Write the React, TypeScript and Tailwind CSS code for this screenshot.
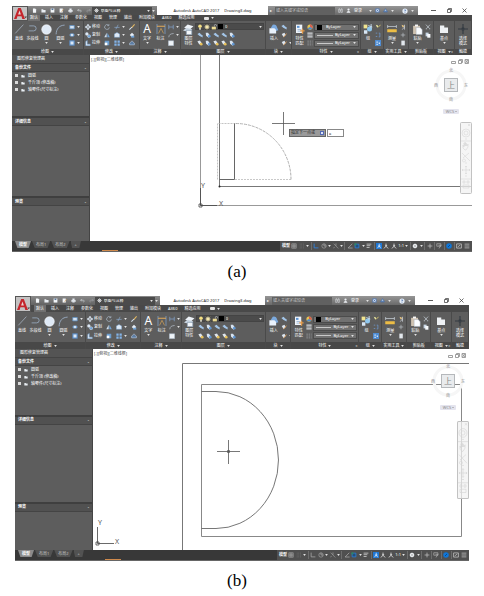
import React from "react";

type Shape = "door" | "arc";

const ICONS: Record<string, React.ReactNode> = {
  line: <path d="M1 7.5L7.5.5" stroke="#aab6c4" strokeWidth=".6" />,
  polyline: <path d="M1 1.5h3.5a2 2 0 0 1 0 4H.5" stroke="#9fb4cc" strokeWidth=".6" fill="none" />,
  circle: <circle cx="4" cy="4" r="3.5" fill="#dfe9f5" stroke="#fff" strokeWidth=".4" />,
  arc: <path d="M.8 7.5C1 3.5 3 1 7 .8" stroke="#9fb4cc" strokeWidth=".6" fill="none" />,
  rect: <path d="M1 2h6v4.5H1z" fill="#d5e3f2" stroke="#5e90c4" />,
  ellipse: <><ellipse cx="4" cy="4" rx="3.4" ry="2.2" fill="#7ba6d4" /><circle cx="4" cy="4" r="1.2" fill="#fff" /></>,
  hatch: <><path d="M.5.5h7v7h-7z" fill="#5d92cf" /><path d="M2 2h4v4H2z" fill="#dce8f5" /></>,
  move: <path d="M4 0v8M0 4h8M4 .5L2.8 2h2.4zM4 7.5L2.8 6h2.4zM.5 4L2 2.8v2.4zM7.5 4L6 2.8v2.4z" stroke="#d9e4f0" strokeWidth=".9" fill="#d9e4f0" />,
  copy: <><circle cx="2.5" cy="2.5" r="2.2" fill="#dce8f5" /><circle cx="5.5" cy="5.6" r="2.1" fill="#6fa3d8" stroke="#fff" strokeWidth=".5" /></>,
  stretch: <path d="M1 7.5V2l2-1.5v5h4v2z" fill="#e9f1fa" stroke="#6c9dcf" strokeWidth=".7" />,
  rotate: <path d="M6 1.5A3.2 3.2 0 1 0 7.2 4.5M6.5.2v2H4.4" stroke="#b8c8da" strokeWidth=".8" fill="none" />,
  mirror: <><path d="M3.6 1v6H.4z" fill="#cfdeee" /><path d="M4.5 1v6h3.2z" fill="#6fa3d8" /></>,
  scale: <><path d="M1 1h6v6H1z" fill="#6b9dcf" /><path d="M1 3.5h3.5V7H1z" fill="#fff" /></>,
  trim: <path d="M.5 4.5h7M5.5 1L2.5 7" stroke="#8eb2da" strokeWidth=".8" />,
  fillet: <path d="M.5 7V2.5L4 .8l3.5 2V7z" fill="#dfeaf6" stroke="#74a3d4" strokeWidth=".6" />,
  array: <path d="M.5.5h3v3h-3zM4.7.5h3v3h-3zM.5 4.7h3v3h-3zM4.7 4.7h3v3h-3z" fill="#83b4e8" />,
  erase: <><path d="M7.5.5L3.5 5" stroke="#e8bc62" strokeWidth="1.5" /><path d="M.5 7.5L4 4" stroke="#d9e4f0" strokeWidth="1.4" /></>,
  explode: <><path d="M1 4l3-3 3 3-3 3z" fill="#e6eef7" /><path d="M3 5h4v2.5H3z" fill="#6fa3d8" /></>,
  offset: <path d="M.8 6.5h6.4a3.2 3.2 0 0 0-2-4L4 1 2.8 2.5a3.2 3.2 0 0 0-2 4z" fill="#5d7ea5" stroke="#d4e0ee" strokeWidth=".6" />,
  dim: <><path d="M.8 0v8M7.2 0v8" stroke="#89b0e2" strokeWidth=".5" /><path d="M.8 1.8h6.4" stroke="#e2ab5a" strokeWidth=".8" /><path d="M2 7.5l2-4 2 4" stroke="#e2ab5a" strokeWidth=".5" fill="none" /></>,
  linear: <path d="M1 1v6M7 1v6M1 4h6" stroke="#89b0e2" strokeWidth=".8" />,
  leader: <path d="M1 7C1.5 3 3.5 2.5 7.5 2" stroke="#c9d5e2" strokeWidth=".8" fill="none" />,
  table: <path d="M.5 1h7v6.5h-7z" fill="#eef3f8" stroke="#a7b9cc" strokeWidth=".6" />,
  layers: <><path d="M3.4.4l4.2 1.2L5 4 .8 2.8z" fill="#eef3f8" /><path d="M2.6 2.7l4.2 1.2-2.6 2L0 4.8z" fill="#ccd8e4" /><path d="M2.4 4.6h4v3.2h-4z" fill="#f2f6fa" stroke="#8296ac" strokeWidth=".5" /></>,
  bulb: <><circle cx="4" cy="3" r="2.4" fill="#f4df84" /><path d="M3 5.4h2v2.2H3z" fill="#f1eeda" /></>,
  sun: <><circle cx="4" cy="4" r="2.4" fill="#fff4c0" /><path d="M4 0v8M0 4h8M1 1l6 6M7 1L1 7" stroke="#efe1a0" strokeWidth=".6" /></>,
  lock: <><path d="M1 3.6h5.5v3.6H1z" fill="#ecdb92" /><path d="M4.5 3.5V2a1.4 1.4 0 0 1 2.8 0v1" stroke="#cfd4d9" strokeWidth=".8" fill="none" /></>,
  layA: <path d="M.5 2.8l3-1.8 2 2.2 2 1.2v3L5 6 3 5z" fill="#a3c5e8" />,
  layB: <><path d="M1 1h3l2.6 3.5L5 7.5 1.5 5z" fill="#d6e3f1" /><circle cx="5.7" cy="5.5" r="1.7" fill="#6096d2" /></>,
  layC: <><path d="M.5 1.5L4 .6l2.5 4L3 6z" fill="#dfe6ee" /><circle cx="5.6" cy="5.6" r="1.8" fill="#e8c25c" /></>,
  insert: <><path d="M3 .5a3 3 0 0 1 3.5 2.3L7.5 5 4 6 1.5 3z" fill="#7ba9dd" /><path d="M.3 3.3h4l1.4 1.5v2.7H.3z" fill="#e9f1fa" /></>,
  blockEdit: <><path d="M1 2.5L4.5 1l2 3L3.3 6.5z" fill="#dce6f1" /><path d="M7.5 2L3.5 7" stroke="#e39a4a" strokeWidth="1" /></>,
  match: <><path d="M.8.5h5v6.7h-5z" fill="#eef3f9" /><path d="M1.6 1.5h2v1.6h-2z" fill="#5c93d2" /><path d="M2 4.4h3M2 5.7h3" stroke="#7a9dc4" strokeWidth=".5" /><path d="M4.2 5.5h3.5M6 3.8v4" stroke="#e39a4a" strokeWidth="1.1" /></>,
  wheel: <><circle cx="4" cy="4" r="3.5" fill="#e7c453" /><path d="M4 4V.5A3.5 3.5 0 0 1 7 5.7z" fill="#d95b50" /><path d="M4 4l3 1.7a3.5 3.5 0 0 1-6 0z" fill="#4d8bd0" /></>,
  lines: <path d="M.5 1.5h7M.5 4h7M.5 6.5h7" stroke="#d5d8dc" strokeWidth="1.4" />,
  linetype: <path d="M.5 1.5h7M.5 4h7M.5 6.5h7" stroke="#a6a9ad" strokeWidth=".9" strokeDasharray="2 1" />,
  group: <><path d="M.5.5h3v3h-3z" fill="#f0e490" /><path d="M.8 5h2.7v2.8H.8z" fill="#d7e6f5" /><circle cx="5.2" cy="4" r="2" fill="#8fc7ee" /><path d="M4.2 1.2l3.2 1.2M6.5 0v3.5" stroke="#cde2f5" strokeWidth=".7" /></>,
  ungroup: <><path d="M1 1l3 1v3L2 3z" fill="#e7e5a0" /><path d="M4 4.5L7.5 1" stroke="#e8d36b" strokeWidth="1.1" /></>,
  groupEdit: <path d="M1 1.5h2M1 6h2M5 1.5h1.5v5H5" stroke="#6d9ad0" strokeWidth="1" fill="none" />,
  groupSel: <><path d="M0 0h8v8H0z" fill="#4f8cd2" /><path d="M2 2h1.6v1.6H2zM2 5h1.6v1.5H2zM5 3.4h1.5v2H5z" fill="#e4f0fc" /></>,
  measure: <><path d="M.5 2h7M.5.8v2.4M7.5.8v2.4" stroke="#d8e2ec" strokeWidth=".5" /><path d="M.2 4.2h7.6v2.4H.2z" fill="#edbd45" /></>,
  quick: <><path d="M2 1l4 1.5-2.4 2z" fill="#efcb83" /><path d="M3 7.5L6 3.8M6 1v6.5" stroke="#d7dde4" strokeWidth=".9" /></>,
  point: <path d="M4 1v6M1 4h6" stroke="#d3dae2" strokeWidth=".7" />,
  calc: <path d="M1.8.8h4.6v6.4H1.8z" fill="#e2e7ec" />,
  paste: <><path d="M.8 1.3h5v6h-5z" fill="#d0c3b2" /><path d="M2.2.4h2.2v1.4H2.2z" fill="#f5f5f5" /><path d="M3 2.6h3l1.4 1.5v3.5H3z" fill="#fafcff" stroke="#9aa7b5" strokeWidth=".3" /></>,
  cut: <path d="M1.2.8l4.6 5M6.8.8l-4.6 5M1 6.4h1.8M5.2 6.4H7" stroke="#cfd8e1" strokeWidth=".9" />,
  copyClip: <><path d="M.8.8h4v5h-4z" fill="#c9d7e5" /><path d="M3 2.6h4.2v5H3z" fill="#f6f9fc" /></>,
  base: <path d="M.8 1.2h3.4v1.6h3v4.4H.8z" fill="#eef1f4" />,
  touch: <path d="M4 0v3M4 5v3M0 4h3M5 4h3M3 3l2 2M5 3L3 5" stroke="#343b42" strokeWidth=".9" />,
  file: <path d="M1.5.7H5L6.6 2.4v5H1.5z" fill="#f4f7fa" />,
  open: <path d="M.7 2h2.6l.8 1h3.2v4H.7z" fill="#e9eef3" />,
  save: <><path d="M1 .8h6v6.5H1z" fill="#f2f5f8" /><path d="M2.4.8h3v2.5h-3z" fill="#587596" /></>,
  saveAs: <><path d="M1 .8h5v6.5H1z" fill="#f2f5f8" /><path d="M7.5 2L4 6" stroke="#dfa253" /></>,
  print: <><path d="M.7 3h6.6v3.3H.7z" fill="#edf1f5" /><path d="M2.2.8h3.6V3H2.2zM2.2 5.3h3.6v2H2.2z" fill="#fff" stroke="#7d8a98" strokeWidth=".4" /></>,
  undo: <path d="M3 1.5L1 3.5l2 2M1 3.5h4.2c2 0 2 3 .2 3" stroke="#dfe4e9" strokeWidth=".9" fill="none" />,
  redo: <path d="M5 1.5l2 2-2 2M7 3.5H2.8c-2 0-2 3-.2 3" stroke="#a5a9ad" strokeWidth=".9" fill="none" />,
  gear: <><circle cx="4" cy="4" r="2.2" fill="none" stroke="#eceff2" strokeWidth="1.3" /><path d="M4 .4v7.2M.4 4h7.2M1.5 1.5l5 5M6.5 1.5l-5 5" stroke="#eceff2" strokeWidth=".7" /></>,
  find: <path d="M1 2h2.3v5H1zM4.7 2H7v5H4.7zM3 3.5h2M1.5 1h1.3M5.2 1h1.3" stroke="#e5e9ed" strokeWidth=".8" fill="none" />,
  user: <><circle cx="4" cy="2.5" r="1.8" fill="#eef1f5" /><path d="M.8 7.5q.3-2.8 3.2-2.8t3.2 2.8z" fill="#eef1f5" /></>,
  exchange: <path d="M1 1.2h5.8v5.6H1zM2.3 2.5L5.5 5.5M5.5 2.5L2.3 5.5" stroke="#3e69a8" strokeWidth="1" fill="#d7e2f0" />,
  cloud: <path d="M4 1L1 6h6zM1 6h6" stroke="#3e69a8" strokeWidth=".9" fill="#a4bddc" />,
  help: <><circle cx="4" cy="4" r="3.5" fill="#e5edf7" /><path d="M3 3q1-1.5 2 0L4 4.6M4 5.5v.8" stroke="#2f5a9c" strokeWidth=".9" fill="none" /></>,
  grid: <path d="M1 1v6M3 1v6M5 1v6M7 1v6M1 1h6M1 3h6M1 5h6M1 7h6" stroke="#b1b1b1" strokeWidth=".7" />,
  snap: <path d="M1 1.5h6M1 4h6M1 6.5h6" stroke="#7e7e7e" strokeWidth=".9" strokeDasharray="1 1.2" />,
  ortho: <path d="M1.5.8v5.7h5.7" stroke="#b4b4b4" strokeWidth=".9" fill="none" />,
  orthoOn: <path d="M1.5.8v5.7h5.7" stroke="#2d86e8" strokeWidth="1.1" fill="none" />,
  polar: <><circle cx="4" cy="4" r="2.9" stroke="#b9b9b9" strokeWidth=".7" fill="none" /><path d="M4 4V1M4 4h3" stroke="#b9b9b9" strokeWidth=".8" /></>,
  iso: <path d="M1 .8l6 6.5M4 .5v3.2M2 5.2L.8 7" stroke="#b5b5b5" strokeWidth=".7" />,
  angle: <path d="M7 1L1.5 6.7h6" stroke="#c3c3c3" strokeWidth=".8" fill="none" />,
  osnap: <><path d="M1.5 1.5h5v5h-5z" stroke="#2d86e8" strokeWidth=".9" fill="#22507c" /><path d="M.5.5h2.6v2.6H.5z" fill="#2e8a62" /></>,
  weight: <path d="M.8 1.5h6.4M.8 3.6h5M.8 6h4" stroke="#c9c9c9" strokeWidth="1.1" />,
  annoOn: <><path d="M0 0h8v8H0z" fill="#1f77d4" /><path d="M4.3 1v3L1.8 7M4.3 4l2 3M2.5 4h3.5" stroke="#e7f1fc" strokeWidth="1" fill="none" /></>,
  anno: <path d="M4 .8v3.4L1.3 7.3M4 4.2l2.8 3.1M3 3.5h2.5" stroke="#d6d6d6" strokeWidth="1.2" fill="none" />,
  plus: <path d="M4 .8v6.4M.8 4h6.4" stroke="#c9c9c9" strokeWidth=".9" />,
  monitor: <path d="M1 1h5.6v3.3H1zM3.4 3h3.2L4 7.3" stroke="#bdbdbd" strokeWidth=".8" fill="none" />,
  perf: <><circle cx="4" cy="4" r="3.7" fill="#0f76d8" /><path d="M2.5 5.5l3-3" stroke="#0a3d73" strokeWidth="1" /></>,
  full: <path d="M.8 1.2h6.4v5.6H.8zM2.3 5.3l3.4-2.7" stroke="#d3d3d3" strokeWidth=".9" fill="none" />,
  menu: <path d="M.8 1.5h6.4M.8 4h6.4M.8 6.5h6.4" stroke="#cecece" strokeWidth=".9" />,
};

function Icon({ name, className = "size-[6px]" }: { name: string; className?: string }) {
  return (
    <svg viewBox="0 0 8 8" fill="none" className={`shrink-0 ${className}`} aria-hidden="true">
      {ICONS[name]}
    </svg>
  );
}

function Caret({ className = "" }: { className?: string }) {
  return (
    <svg viewBox="0 0 4 3" className={`w-[3px] h-[2px] shrink-0 ${className}`} aria-hidden="true">
      <path d="M0 0h4L2 3z" fill="#e3e3e3" />
    </svg>
  );
}

function BigButton({ icon, label, caret, className = "" }: { icon: React.ReactNode; label: string[]; caret?: boolean; className?: string }) {
  return (
    <button className={`flex flex-col items-center shrink-0 pt-[1px] ${className}`}>
      <span className="h-[14px] flex items-center">{icon}</span>
      {label.map((l) => (
        <span key={l} className="h-[5px] leading-[5px] whitespace-nowrap">{l}</span>
      ))}
      {caret && <Caret className="mt-[1px]" />}
    </button>
  );
}

function IconColumn({ names, carets = [], className = "" }: { names: string[]; carets?: number[]; className?: string }) {
  return (
    <div className={`grid grid-rows-3 shrink-0 py-[2px] ${className}`}>
      {names.map((name, i) => (
        <button key={i} aria-label={name} className="flex items-center gap-[2px]">
          <Icon name={name} />
          {carets.includes(i) && <Caret />}
        </button>
      ))}
    </div>
  );
}

function Panel({ title, caret, launcher, roomy, children }: { title: string; caret?: boolean; launcher?: boolean; roomy: boolean; children: React.ReactNode }) {
  return (
    <section className="flex flex-col min-w-0 border-r border-[#4a4a4a] bg-[#5d5d5d]">
      <div className={`flex px-[1px] overflow-hidden ${roomy ? "h-[30px] pt-[1px]" : "h-[28px]"}`}>{children}</div>
      <div className={`relative flex items-center justify-center gap-[2px] bg-[#484848] ${roomy ? "h-[7px]" : "h-[6px]"}`}>
        <span className="whitespace-nowrap">{title}</span>
        {caret && <Caret />}
        {launcher && <span className="absolute right-[1px] text-[4px]">»</span>}
      </div>
    </section>
  );
}

function Combo({ label, value, swatch, ruled }: { label: string; value: string; swatch?: boolean; ruled?: boolean }) {
  return (
    <label className="flex items-center h-[7px] px-[2px] gap-[2px] bg-[#717171] border border-[#4c4c4c] min-w-0">
      {swatch && <span className="size-[5px] bg-black shrink-0" />}
      {ruled && <span className="flex-1 h-px bg-[#c9c9c9]" />}
      <select aria-label={label} className={`appearance-none leading-none bg-transparent min-w-0 ${ruled ? "w-[16px]" : "flex-1 pl-[2px]"}`}>
        <option>{value}</option>
      </select>
      <Caret />
    </label>
  );
}

function Ribbon({ roomy }: { roomy: boolean }) {
  return (
    <div className="grid grid-cols-[72fr_56fr_41fr_85fr_26fr_69fr_23fr_25fr_25fr_21fr_17fr]">
      <Panel title="绘图" caret roomy={roomy}>
        <BigButton icon={<Icon name="line" className="size-[10px]" />} label={["直线"]} className="w-[12px]" />
        <BigButton icon={<Icon name="polyline" className="size-[10px]" />} label={["多段线"]} className="w-[15px]" />
        <BigButton icon={<Icon name="circle" className="size-[11px]" />} label={["圆"]} caret className="w-[13px]" />
        <BigButton icon={<Icon name="arc" className="size-[11px]" />} label={["圆弧"]} caret className="w-[15px]" />
        <IconColumn names={["rect", "ellipse", "hatch"]} carets={[0, 1, 2]} className="ml-[1px]" />
      </Panel>
      <Panel title="修改" caret roomy={roomy}>
        <div className="grid grid-rows-3 py-[2px] w-[19px] shrink-0">
          {[["move", "移动"], ["copy", "复制"], ["stretch", "拉伸"]].map(([name, label]) => (
            <button key={name} className="flex items-center gap-[1px]">
              <Icon name={name} />
              <span className="whitespace-nowrap">{label}</span>
            </button>
          ))}
        </div>
        <IconColumn names={["rotate", "mirror", "scale"]} className="w-[10px]" />
        <IconColumn names={["trim", "fillet", "array"]} carets={[0, 1, 2]} className="w-[15px]" />
        <IconColumn names={["erase", "explode", "offset"]} />
      </Panel>
      <Panel title="注释" caret roomy={roomy}>
        <BigButton icon={<span className="text-[12px] leading-none">A</span>} label={["文字"]} caret className="w-[12px]" />
        <BigButton icon={<Icon name="dim" className="size-[10px]" />} label={["标注"]} className="w-[15px]" />
        <IconColumn names={["linear", "leader", "table"]} carets={[0, 1]} />
      </Panel>
      <Panel title="图层" caret roomy={roomy}>
        <BigButton icon={<Icon name="layers" className="size-[11px]" />} label={["图层", "特性"]} className="w-[13px]" />
        <div className="flex-1 min-w-0 grid grid-rows-3 py-[2px]">
          <label className="flex items-center gap-[1px] h-[7px] px-[1px] bg-[#4b4b4b] border border-[#444]">
            <Icon name="bulb" />
            <Icon name="sun" />
            <Icon name="lock" />
            <span className="size-[5px] bg-black shrink-0" />
            <select aria-label="图层" className="appearance-none leading-none flex-1 min-w-0 pl-[1px]">
              <option>0</option>
            </select>
            <Caret />
          </label>
          <div className="flex items-center gap-[2px] pl-[2px]">
            {["layA", "layB", "layA", "layA", "layB"].map((n, i) => (
              <button key={i} aria-label="图层工具"><Icon name={n} /></button>
            ))}
          </div>
          <div className="flex items-center gap-[2px] pl-[2px]">
            {["layC", "layB", "layC", "layC", "layB"].map((n, i) => (
              <button key={i} aria-label="图层状态"><Icon name={n} /></button>
            ))}
          </div>
        </div>
      </Panel>
      <Panel title="块" caret roomy={roomy}>
        <BigButton icon={<Icon name="insert" className="size-[10px]" />} label={["插入"]} className="w-[14px]" />
        <IconColumn names={["layA", "blockEdit", "blockEdit"]} carets={[2]} />
      </Panel>
      <Panel title="特性" caret launcher roomy={roomy}>
        <BigButton icon={<Icon name="match" className="size-[10px]" />} label={["特性", "匹配"]} className="w-[13px]" />
        <IconColumn names={["wheel", "lines", "linetype"]} className="w-[8px] pl-[1px]" />
        <div className="flex-1 min-w-0 grid grid-rows-3 items-center py-[2px]">
          <Combo label="颜色" value="ByLayer" swatch />
          <Combo label="线宽" value="ByLayer" ruled />
          <Combo label="线型" value="ByLayer" ruled />
        </div>
      </Panel>
      <Panel title="组" caret roomy={roomy}>
        <BigButton icon={<Icon name="group" className="size-[10px]" />} label={["组"]} className="w-[12px]" />
        <IconColumn names={["ungroup", "groupEdit", "groupSel"]} className="ml-[1px]" />
      </Panel>
      <Panel title="实用工具" caret roomy={roomy}>
        <BigButton icon={<Icon name="measure" className="size-[10px]" />} label={["测量"]} caret className="w-[14px]" />
        <IconColumn names={["quick", "point", "calc"]} className="ml-[1px]" />
      </Panel>
      <Panel title="剪贴板" roomy={roomy}>
        <BigButton icon={<Icon name="paste" className="size-[11px]" />} label={["粘贴"]} caret className="w-[15px]" />
        <div className="grid grid-rows-3 py-[2px]">
          <button aria-label="剪切" className="flex items-center"><Icon name="cut" /></button>
          <button aria-label="复制" className="flex items-center"><Icon name="copyClip" /></button>
        </div>
      </Panel>
      <Panel title="视图" caret launcher roomy={roomy}>
        <BigButton icon={<Icon name="base" className="size-[10px]" />} label={["基点"]} caret className="w-full" />
      </Panel>
      <Panel title="触摸" roomy={roomy}>
        <BigButton icon={<Icon name="touch" className="size-[10px]" />} label={["选择", "模式"]} className="w-full" />
      </Panel>
    </div>
  );
}

const TABS = ["默认", "插入", "注释", "参数化", "视图", "管理", "输出", "附加模块", "A360", "精选应用"];

function TitleBar({ roomy }: { roomy: boolean }) {
  return (
    <header className="flex">
      <button aria-label="应用程序菜单" className="w-[16px] shrink-0 bg-[#c4c2c2] border border-[#555] flex items-center justify-center">
        <svg viewBox="0 0 14 13" className="w-[14px] h-[13px]" aria-hidden="true">
          <path d="M1 12L5.2 1h2.6L12 12H9.3L8.5 9.3H4.4L3.6 12z" fill="#c5252c" />
          <path d="M6.5 3.5L5.1 7.5h2.8z" fill="#e9d5d5" />
          <path d="M11.4 9.5H14l-1.3 1.8z" fill="#444" />
        </svg>
      </button>
      <div className="flex-1 min-w-0">
        <div className="flex h-[9px]">
          <div className="w-[129px] shrink-0 flex items-center justify-between pl-[4px] pr-[2px] bg-linear-to-b from-[#8a8a8a] to-[#626262]">
            <div className="flex items-center gap-[4px]">
              {["file", "open", "save", "saveAs", "print", "undo", "redo"].map((n) => (
                <button key={n} aria-label={n}><Icon name={n} className="size-[5px]" /></button>
              ))}
            </div>
            <label className="flex items-center w-[60px] h-[8px] px-[2px] gap-[2px] bg-[#4b4b4b]">
              <Icon name="gear" className="size-[5px]" />
              <select aria-label="工作空间" className="appearance-none leading-none flex-1 min-w-0">
                <option>草图与注释</option>
              </select>
              <Caret />
            </label>
            <Caret />
          </div>
          <h1 className="flex-1 flex items-center justify-center gap-[5px] text-[#222] whitespace-nowrap">
            <span>Autodesk AutoCAD 2017</span>
            <span>Drawing3.dwg</span>
          </h1>
          <div className="w-[150px] shrink-0 flex items-center gap-[3px] px-[2px] bg-linear-to-b from-[#969696] to-[#6a6a6a]">
            <span className="text-[4px]">▸</span>
            <input aria-label="搜索" placeholder="键入关键字或短语" className="w-[60px] h-[8px] px-[1px] bg-[#616161] placeholder:text-[#c4c4c4]" />
            <Icon name="find" className="size-[5px]" />
            <Icon name="user" className="size-[5px]" />
            <span className="flex-1">登录</span>
            <Caret />
            <Icon name="exchange" className="size-[5px]" />
            <Icon name="cloud" className="size-[5px]" />
            <Caret />
            <Icon name="help" className="size-[6px] ml-[5px]" />
            <Caret className="mr-[2px]" />
          </div>
          <div className="w-[54px] shrink-0 flex items-center justify-between pl-[13px] pr-[5px]">
            <button aria-label="最小化"><svg viewBox="0 0 5 5" className="size-[5px]"><path d="M0 2.5h5" stroke="#333" strokeWidth=".8" /></svg></button>
            <button aria-label="还原"><svg viewBox="0 0 5 5" className="size-[5px]"><path d="M.5 1.5h3v3h-3zM1.5 1.5v-1h3v3h-1" fill="none" stroke="#333" strokeWidth=".7" /></svg></button>
            <button aria-label="关闭"><svg viewBox="0 0 5 5" className="size-[5px]"><path d="M.5.5l4 4M4.5.5l-4 4" stroke="#333" strokeWidth=".7" /></svg></button>
          </div>
        </div>
        <nav className={`flex items-center gap-[7px] bg-[#494949] ${roomy ? "h-[7px] pl-[3px]" : "h-[6px]"}`}>
          {TABS.map((tab, i) => (
            <button key={tab} className={`whitespace-nowrap h-full ${i === 0 ? "bg-[#707070] px-[2px] -mr-[2px]" : ""}`}>{tab}</button>
          ))}
          <button aria-label="显示" className="flex items-center gap-[2px] ml-[3px]">
            <span className="w-[5px] h-[3px] rounded-[1px] bg-[#e3e3e3]" />
            <Caret />
          </button>
        </nav>
      </div>
    </header>
  );
}

function SectionTitle({ children }: { children: React.ReactNode }) {
  return (
    <div className="h-[8px] shrink-0 px-[3px] flex items-center justify-between bg-[#515151] border-b border-[#444] font-bold">
      <h3>{children}</h3>
      <span>-</span>
    </div>
  );
}

function RecoveryPanel() {
  return (
    <aside className="w-[78px] shrink-0 flex flex-col bg-[#5d5d5d] border-r border-[#444]">
      <h2 className="h-[9px] shrink-0 pl-[5px] flex items-center bg-[#545454] border-b border-[#444]">图形修复管理器</h2>
      <SectionTitle>备份文件</SectionTitle>
      <ul className="flex-[45_1_0px] pl-[3px]">
        {["圆弧", "千斤顶 (修改稿)", "轴零件(尺寸标注)"].map((name) => (
          <li key={name} className="h-[7px] flex items-center gap-[2px] whitespace-nowrap">
            <span className="size-[3px] bg-[#dadada]" />
            <Icon name="open" className="size-[4px] ml-[1px]" />
            <span className="ml-[1px]">{name}</span>
          </li>
        ))}
      </ul>
      <div className="h-[2px] bg-[#3f3f3f]" />
      <SectionTitle>详细信息</SectionTitle>
      <div className="flex-[71_1_0px]" />
      <div className="h-[2px] bg-[#3f3f3f]" />
      <SectionTitle>预览</SectionTitle>
      <div className="flex-[35_1_0px]" />
    </aside>
  );
}

function ViewCube() {
  return (
    <svg viewBox="0 0 38 52" className="w-[38px] h-[52px]" fontSize="4" textAnchor="middle" fill="#8d8d8d">
      <circle cx="19" cy="19" r="14" fill="none" stroke="#f6f6f6" strokeWidth="3" />
      <rect x="12.500" y="12.500" width="13" height="13" fill="#e9ebed" stroke="#b5b8bb" />
      <text x="19" y="22" fontSize="8" fill="#888">上</text>
      <text x="19" y="6">北</text>
      <text x="19" y="35">南</text>
      <text x="4" y="21">西</text>
      <text x="34" y="21">东</text>
      <rect x="11" y="43" width="16" height="5" rx="1" fill="#e4e4ee" />
      <text x="18" y="47">WCS</text>
      <path d="M23 45l1 1 1-1" fill="none" stroke="#8d8d8d" strokeWidth=".5" />
    </svg>
  );
}

function NavBar({ roomy }: { roomy: boolean }) {
  return (
    <svg viewBox="0 0 12 72" preserveAspectRatio="none" className={`w-[12px] ${roomy ? "h-[78px]" : "h-[72px]"}`} fill="none" stroke="#d6d6d6" strokeWidth=".6">
      <rect x=".5" y=".5" width="11" height="71" rx="1" fill="#f1f1f1" fillOpacity=".75" stroke="#c2c2c2" strokeWidth="1" />
      <circle cx="6" cy="11" r="4" />
      <circle cx="6" cy="11" r="2" />
      <path d="M1 19h10M5 17h2M3 26V23l1 2v-4l1 3v-4l1 4v-3l1 3 1-2v3l-2 3H5zM2 31l8 8M9 31l-6 5M4 37a1.500 1.500 0 1 1-.1 0zM5 41h2" />
      <path d="M6 44v8M2 48h8M5 45l1-1 1 1M5 51l1 1 1-1M3 47l-1 1 1 1M9 47l1 1-1 1M5 54h2M1 57h10M3 59h2v2H3zM7 59h2v2H7zM3 63h6v3H3zM8 2l2 2M10 2L8 4" />
    </svg>
  );
}

function DoorDrawing() {
  return (
    <svg viewBox="0 0 382 186" preserveAspectRatio="xMinYMin slice" className="w-full h-[186px]" fill="none" stroke="#777">
      <path d="M110.500 0V150.500H382" stroke="#999" />
      <path d="M129.500 0V131.500H382" stroke="#777" />
      <path d="M144.500 68V124.500H129.500" stroke="#666" />
      <path d="M127.500 124.500V68.500H146" stroke="#aaa" strokeWidth=".7" strokeDasharray="2 1" />
      <path d="M146 68.500A55 56 0 0 1 201 124.500" stroke="#b0b0b0" strokeDasharray="3 1" />
      <path d="M145 124.500H201" stroke="#bbb" strokeWidth=".8" strokeDasharray="2 1" />
      <circle cx="129.500" cy="131.500" r="1" fill="#222" stroke="none" />
      <path d="M193.500 57V80M182 68.500H205" stroke="#555" strokeWidth=".8" />
      <path d="M110.500 133V150.500H127M109 149h3v3h-3z" stroke="#444" strokeWidth=".8" />
      <g fontSize="7" fill="#555" stroke="none">
        <text x="111" y="133">Y</text>
        <text x="129" y="151">X</text>
      </g>
    </svg>
  );
}

function ArcDrawing() {
  return (
    <svg viewBox="0 0 376 201" preserveAspectRatio="xMinYMin slice" className="w-full h-[201px]" fill="none" stroke="#777">
      <path d="M89.500 201V14.500H376" />
      <path d="M108.500 35.500H368.500V187.500H108.500z" stroke="#888" />
      <path d="M108.500 42.500H123A62.500 68.500 0 0 1 123 179.500H108.500" stroke="#666" strokeWidth=".9" />
      <path d="M135.500 91V115M124 102.500H147M134.500 101.500h2v2h-2z" stroke="#555" strokeWidth=".8" />
      <path d="M4.500 178V194.500H21M3 193h3v3H3z" stroke="#444" strokeWidth=".8" />
      <g fontSize="7" fill="#555" stroke="none">
        <text x="5" y="176">Y</text>
        <text x="22" y="195">X</text>
      </g>
    </svg>
  );
}

function Canvas({ shape, roomy }: { shape: Shape; roomy: boolean }) {
  return (
    <main className="relative flex-1 min-w-0 bg-white text-[#444]">
      {shape === "door" ? <DoorDrawing /> : <ArcDrawing />}
      <span className="absolute left-[1px] top-[3px] whitespace-nowrap">[-][俯视][二维线框]</span>
      <svg viewBox="0 0 18 5" className="absolute right-[3px] top-[4px] w-[18px] h-[5px]" fill="none" stroke="#888" strokeWidth=".8">
        <path d="M.5 2.500h4v2h-4zM7.500 1.500h3v3h-3zM8.500 1.500v-1h3v3h-1M14 .5h3.500v4H14zM14.500 1l2.500 3M17 1l-2.500 3" />
      </svg>
      <div className={`absolute right-[2px] ${roomy ? "top-[13px]" : "top-[11px]"}`}><ViewCube /></div>
      <div className={`absolute right-0 ${roomy ? "top-[72px]" : "top-[67px]"}`}><NavBar roomy={roomy} /></div>
      {shape === "door" && (
        <label className="absolute left-[199px] top-[74px] flex items-center gap-[1px]">
          <span className="w-[37px] h-[8px] px-[1px] flex items-center justify-between bg-[#9a9a9a] border border-[#666] text-[#222] whitespace-nowrap">
            指定下一点或
            <span className="size-[4px] bg-[#dfe6f7] border border-[#5469b5]" />
          </span>
          <input defaultValue="a" className="w-[17px] h-[8px] px-[1px] bg-white border border-[#888] text-[#222]" />
        </label>
      )}
    </main>
  );
}

const LAYOUT_TAB = "h-[7px] px-[4px] [clip-path:polygon(0_0,100%_0,85%_100%,15%_100%)] whitespace-nowrap";

function StatusBar({ shape }: { shape: Shape }) {
  const items = [
    "grid", "snap", "v", "|", shape === "door" ? "orthoOn" : "ortho", "polar", "v", "iso", "v", "|", "angle", "osnap", "v", "weight", "|",
    "annoOn", "anno", "anno", "1:1", "v", "|", "gear", "v", "|", "plus", "|", "monitor", "|", "perf", "|", "full", "menu",
  ];
  return (
    <footer className="flex justify-between h-[11px] bg-[#383838] border-b border-[#666]">
      <div className="flex items-start pl-[3px] gap-[1px] text-[#c4c4c4]">
        <button className={`${LAYOUT_TAB} bg-[#8a8a8a] text-white font-bold`}>模型</button>
        <button className={`${LAYOUT_TAB} bg-[#525252]`}>布局1</button>
        <button className={`${LAYOUT_TAB} bg-[#525252]`}>布局2</button>
        <button className={`${LAYOUT_TAB} bg-[#525252]`}>+</button>
        <span className="self-end w-[16px] h-px ml-[20px] bg-[#d08a4c]" />
      </div>
      <div className="w-[192px] flex items-center justify-between pl-[2px] pr-[2px] bg-[#505050]">
        <button className="font-bold">模型</button>
        {items.map((item, i) => {
          if (item === "|") return <span key={i} className="w-px h-[8px] bg-[#6d6d6d]" />;
          if (item === "v") return <Caret key={i} />;
          if (item === "1:1") return <button key={i}>1:1</button>;
          return <button key={i} aria-label={item}><Icon name={item} /></button>;
        })}
      </div>
    </footer>
  );
}

function CadWindow({ shape, roomy = false }: { shape: Shape; roomy?: boolean }) {
  return (
    <div className="text-[4px] leading-none text-white [&_button]:leading-none">
      <TitleBar roomy={roomy} />
      <Ribbon roomy={roomy} />
      <div className="flex">
        <RecoveryPanel />
        <Canvas shape={shape} roomy={roomy} />
      </div>
      <StatusBar shape={shape} />
    </div>
  );
}

function Caption({ children }: { children: React.ReactNode }) {
  return (
    <figcaption className="h-[44px] pr-[10px] pb-[5px] flex items-center justify-center text-[17px] text-black font-['Liberation_Serif',serif]">
      {children}
    </figcaption>
  );
}

export default function App() {
  return (
    <div className="bg-white pt-[6px] font-['Noto_Sans','Noto_Sans_CJK_SC',sans-serif]">
      <figure className="mx-[12px]">
        <CadWindow shape="door" />
        <Caption>(a)</Caption>
      </figure>
      <figure className="mx-[15px] -mb-[10px]">
        <CadWindow shape="arc" roomy />
        <Caption>(b)</Caption>
      </figure>
    </div>
  );
}
